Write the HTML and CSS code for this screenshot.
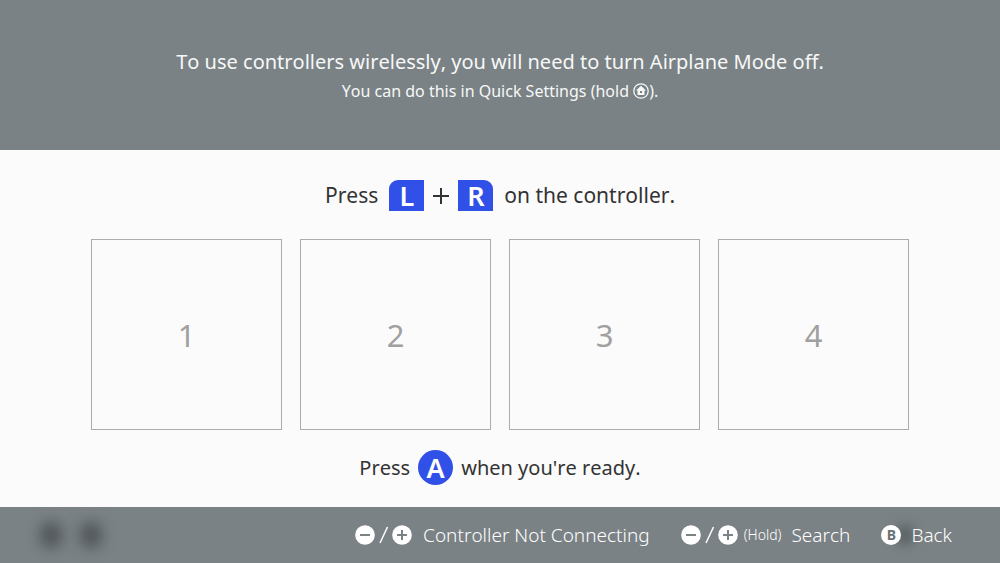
FILE: index.html
```html
<!DOCTYPE html>
<html lang="en">
<head>
<meta charset="utf-8">
<meta name="viewport" content="width=device-width, initial-scale=1">
<title>Controllers</title>
<link rel="stylesheet" href="styles.css">
</head>
<body>
<header class="notice">
  <h1 class="notice-title">To use controllers wirelessly, you will need to turn Airplane Mode off.</h1>
  <p class="notice-hint">You can do this in Quick Settings (hold <svg class="home" viewBox="0 0 16 16" role="img" aria-label="HOME"><circle cx="8" cy="8" r="7.2" fill="none" stroke="currentColor" stroke-width="1.3"/><path fill="currentColor" fill-rule="evenodd" d="M8 2.8 3 7.6h1.5V12h7V7.6H13zM7 8h2v2H7z"/></svg>).</p>
</header>
<main class="pairing">
  <p class="prompt"><span>Press</span><span class="combo"><kbd class="key key-l">L</kbd><svg class="plus" viewBox="0 0 16 16" role="img" aria-label="plus"><path d="M8 0v16M0 8h16" stroke="currentColor" stroke-width="2"/></svg><kbd class="key key-r">R</kbd></span><span>on the controller.</span></p>
  <ol class="slots">
    <li class="slot">1</li>
    <li class="slot">2</li>
    <li class="slot">3</li>
    <li class="slot">4</li>
  </ol>
  <p class="prompt ready"><span>Press</span><kbd class="key key-a">A</kbd><span>when you're ready.</span></p>
</main>
<footer class="bar">
  <div class="status" aria-hidden="true"><span class="smudge"></span><span class="smudge"></span></div>
  <nav class="actions">
    <button class="action" type="button">
      <svg class="pair" viewBox="0 0 58 20" aria-hidden="true"><circle cx="10" cy="10" r="9.8" fill="#fff"/><path class="sign" d="M5 10h10"/><path class="slash" d="M25 18 32.5 2"/><circle cx="47" cy="10" r="9.8" fill="#fff"/><path class="sign" d="M42 10h10M47 5v10"/></svg>
      <span class="label">Controller Not Connecting</span>
    </button>
    <button class="action" type="button">
      <svg class="pair" viewBox="0 0 58 20" aria-hidden="true"><circle cx="10" cy="10" r="9.8" fill="#fff"/><path class="sign" d="M5 10h10"/><path class="slash" d="M25 18 32.5 2"/><circle cx="47" cy="10" r="9.8" fill="#fff"/><path class="sign" d="M42 10h10M47 5v10"/></svg>
      <span class="hold">(Hold)</span>
      <span class="label">Search</span>
    </button>
    <button class="action" type="button"><kbd class="round">B</kbd><span class="label">Back</span></button>
  </nav>
</footer>
</body>
</html>
```
FILE: styles.css
```css
* { box-sizing: border-box; }
body {
  margin: 0;
  min-height: 100vh;
  display: flex;
  flex-direction: column;
  background: #fbfbfb;
  color: #333;
  font-family: "Noto Sans", "Open Sans", sans-serif;
  font-weight: 400;
  font-kerning: none;
}
h1, p, ol { margin: 0; padding: 0; font-weight: inherit; }
kbd { font-family: inherit; }

.notice {
  padding: 46px 24px 44px;
  background: #7b8285;
  color: #f6f8f8;
  text-align: center;
}
.notice-title { font-size: 20px; line-height: 31px; }
.notice-hint { font-size: 16px; line-height: 29px; }
.home { width: 16px; height: 16px; vertical-align: -2px; }

.pairing { flex: 1; padding: 28px 91px 20px; }
.prompt {
  display: flex;
  justify-content: center;
  align-items: center;
  gap: 11px;
  font-size: 21px;
  line-height: 35px;
}
.combo { display: flex; align-items: center; gap: 9px; }
.plus { width: 16px; height: 16px; }
.key {
  display: flex;
  align-items: center;
  justify-content: center;
  width: 35px;
  height: 31px;
  background: #3150e8;
  color: #fff;
  font-size: 27px;
  font-weight: 600;
  line-height: 29px;
}
.key-l { border-top-left-radius: 9px; }
.key-r { border-top-right-radius: 9px; }
.key-a { height: 35px; border-radius: 50%; }
.ready { margin-top: 20px; gap: 8px; font-size: 20px; }

.slots {
  display: grid;
  grid-template-columns: repeat(4, 1fr);
  gap: 18px;
  margin-top: 26px;
  list-style: none;
}
.slot {
  display: flex;
  align-items: center;
  justify-content: center;
  aspect-ratio: 1;
  border: 1px solid #acacac;
  color: #a0a0a0;
  font-size: 31px;
}

.bar {
  display: flex;
  align-items: center;
  justify-content: space-between;
  height: 56px;
  padding: 0 48px 0 40px;
  background: #7b8285;
  color: #fff;
}
.status { display: flex; gap: 18px; }
.smudge { width: 22px; height: 26px; border-radius: 8px; background: #51575a; filter: blur(7px); }
.actions { display: flex; gap: 31px; }
.action {
  display: flex;
  align-items: center;
  padding: 0;
  border: 0;
  background: none;
  color: inherit;
  font: inherit;
  font-size: 19px;
  font-weight: 300;
  line-height: 28px;
}
.pair { width: 58px; height: 20px; }
.sign { stroke: #7b8285; stroke-width: 2; }
.slash { stroke: #fff; stroke-width: 1.5; }
.label { margin-left: 10px; }
.hold { margin-left: 5px; font-size: 14px; }
.round {
  width: 20px;
  height: 20px;
  border-radius: 50%;
  background: #fff;
  color: #6b7275;
  font-size: 14px;
  font-weight: 700;
  line-height: 20px;
  box-shadow: 14px 0 12px #5a6063;
}
```
